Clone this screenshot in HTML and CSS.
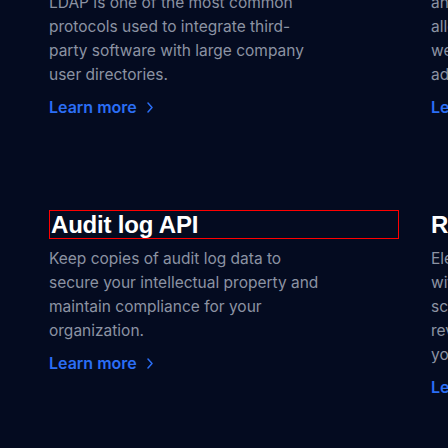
FILE: index.html
```html
<!DOCTYPE html>
<html lang="en">
<head>
<meta charset="utf-8">
<title>Integrations</title>
<link rel="stylesheet" href="styles.css">
</head>
<body>
<div class="viewport">
<main class="features">
  <article class="card">
    <h3 class="card-title">LDAP</h3>
    <p class="card-text">LDAP is one of the most common protocols used to integrate third-<br>party software with large company user directories.</p>
    <a class="card-link" href="#">Learn more <svg class="chev" width="6" height="11" viewBox="0 0 6 11"><polyline points="1,1 5,5.5 1,10" /></svg></a>
  </article>
  <article class="card">
    <h3 class="card-title">SAML SSO</h3>
    <p class="card-text">an open standard for sign-on that<br>allows your team to log in with tools<br>we already support, while keeping<br>admins in control.</p>
    <a class="card-link" href="#">Learn more <svg class="chev" width="6" height="11" viewBox="0 0 6 11"><polyline points="1,1 5,5.5 1,10" /></svg></a>
  </article>
  <article class="card">
    <h3 class="card-title card-title--outlined">Audit log API</h3>
    <p class="card-text">Keep copies of audit log data to secure your intellectual property and maintain compliance for your organization.</p>
    <a class="card-link" href="#">Learn more <svg class="chev" width="6" height="11" viewBox="0 0 6 11"><polyline points="1,1 5,5.5 1,10" /></svg></a>
  </article>
  <article class="card">
    <h3 class="card-title">Retention policies</h3>
    <p class="card-text">Electronic records are kept in line<br>with retention rules you can<br>schedule, audit and<br>review at any time to keep<br>your records clean.</p>
    <a class="card-link" href="#">Learn more <svg class="chev" width="6" height="11" viewBox="0 0 6 11"><polyline points="1,1 5,5.5 1,10" /></svg></a>
  </article>
</main>
</div>
</body>
</html>
```

FILE: styles.css
```css
html, body {
  margin: 0;
  padding: 0;
  background: #040b20;
}

body {
  font-family: Inter, "Liberation Sans", sans-serif;
  color: #8c93a3;
}

.viewport {
  width: 448px;
  height: 448px;
  overflow: hidden;
}

.features {
  display: grid;
  grid-template-columns: 350px 350px;
  column-gap: 32px;
  row-gap: 91px;
  padding-left: 49px;
  margin-top: -46px;
  align-items: start;
}

.card {
  display: flex;
  flex-direction: column;
  gap: 8px;
  align-items: flex-start;
}

.card-title {
  margin: 0;
  width: 100%;
  font-family: "Liberation Sans", Arial, sans-serif;
  font-size: 24px;
  line-height: 29px;
  font-weight: 700;
  letter-spacing: -0.2px;
  color: #ffffff;
}

.card-title--outlined {
  outline: 1px solid #ff0000;
  outline-offset: -1px;
  padding-left: 2px;
  box-sizing: border-box;
}

.card-text {
  margin: 0;
  width: 280px;
  font-size: 15.5px;
  line-height: 24px;
}

.card-link {
  display: inline-flex;
  align-items: center;
  gap: 10px;
  font-size: 16px;
  line-height: 24px;
  font-weight: 600;
  color: #2b6ef5;
  text-decoration: none;
}

.chev {
  fill: none;
  stroke: #2b6ef5;
  stroke-width: 1.5;
  stroke-linecap: round;
  stroke-linejoin: round;
}
```
